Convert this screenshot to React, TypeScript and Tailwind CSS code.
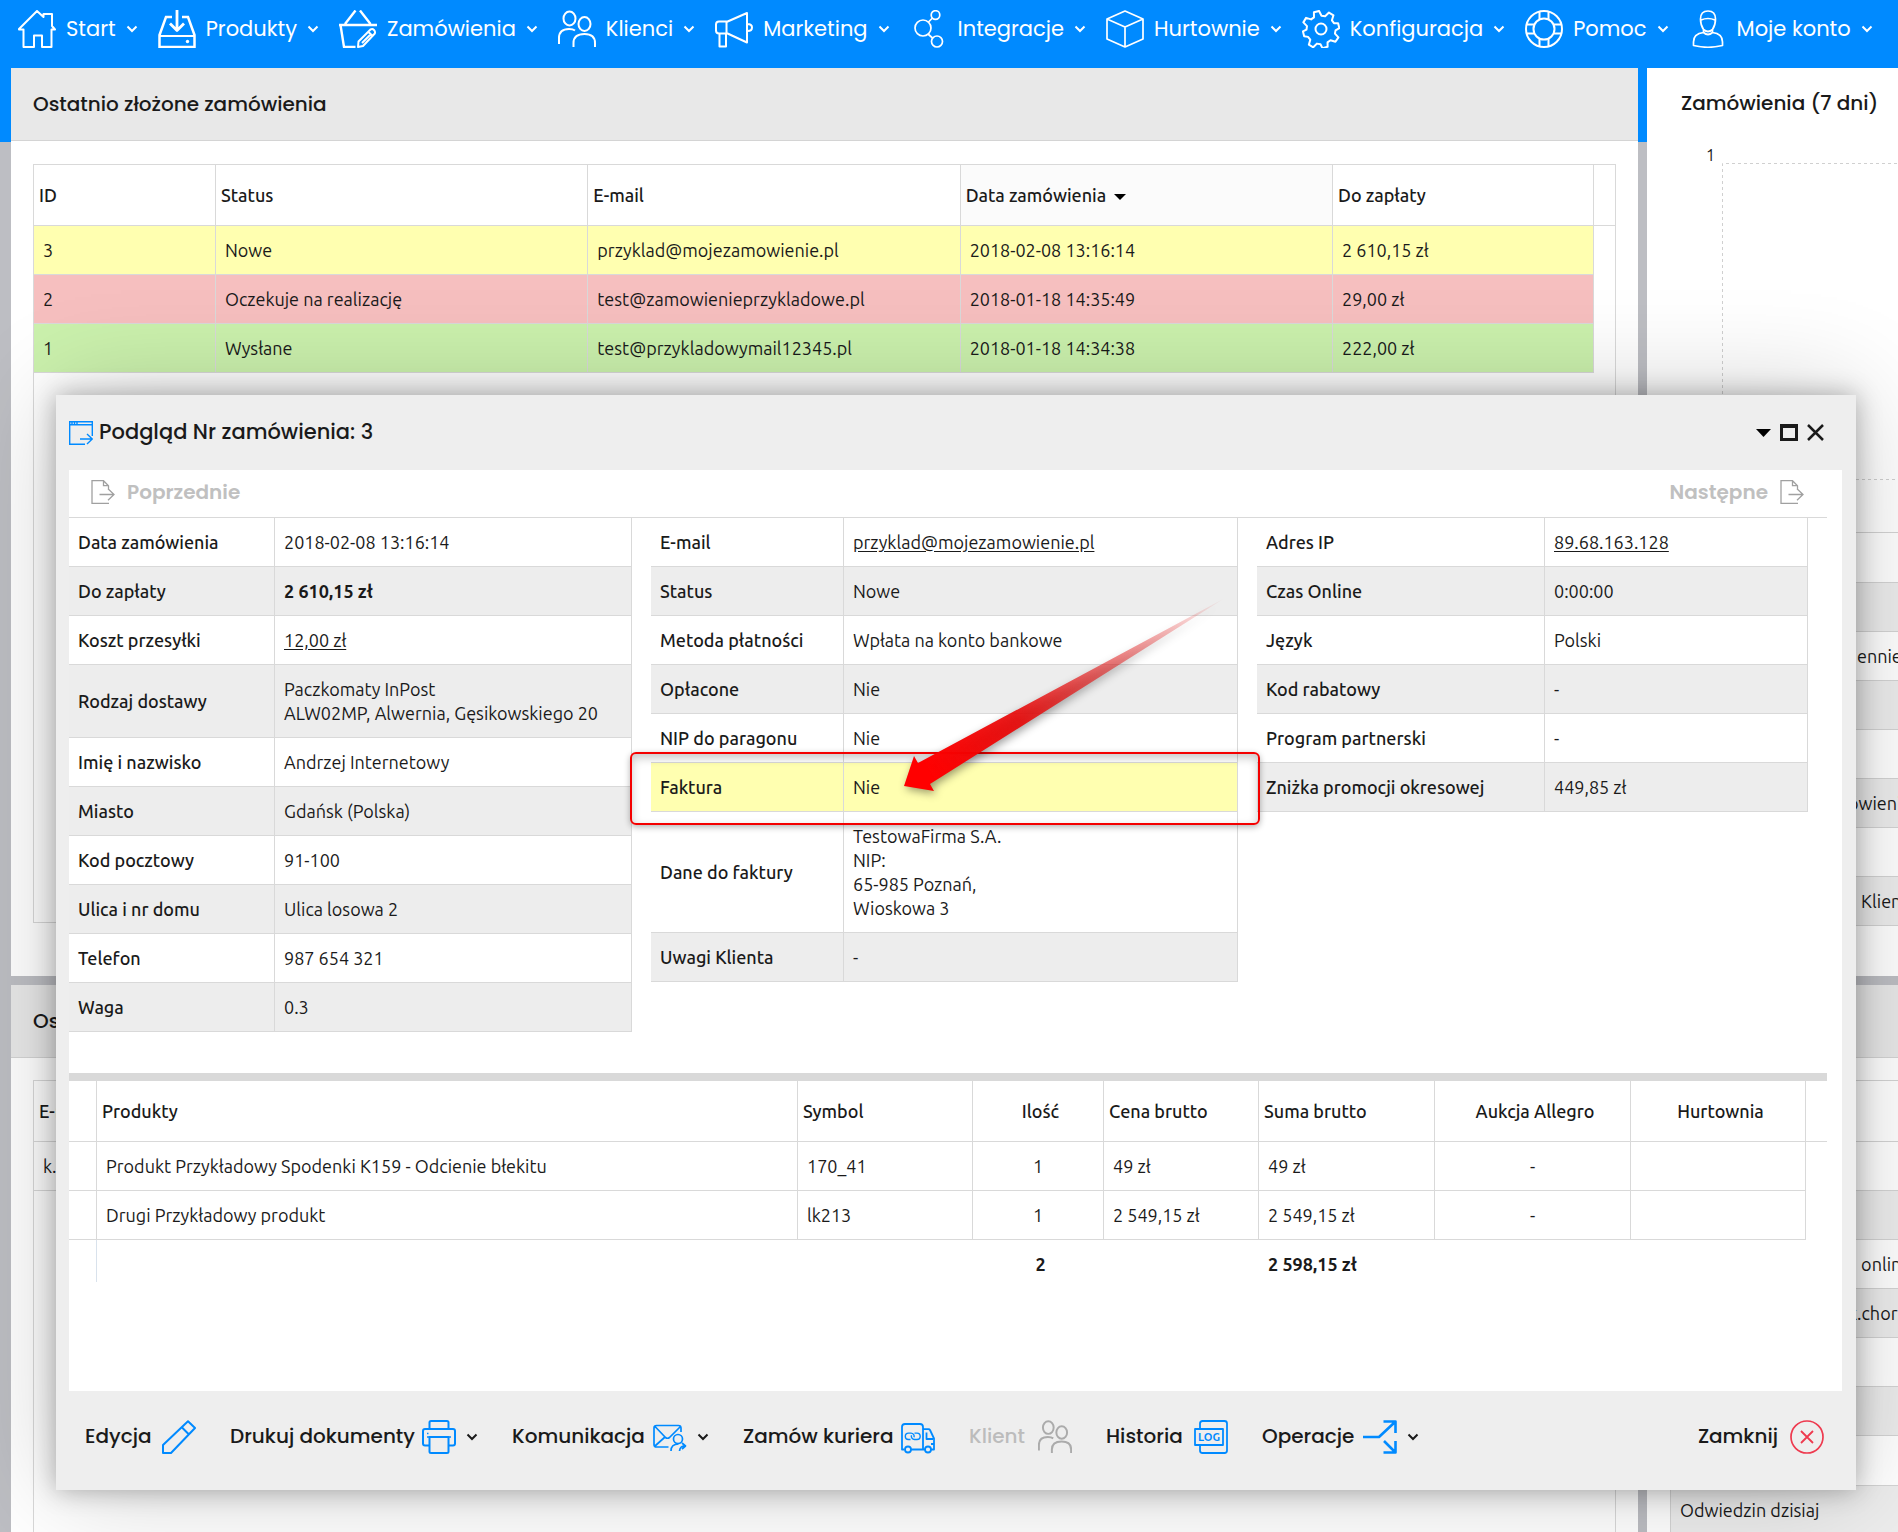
import type { ReactNode } from "react";
import clsx from "clsx";

const HEADING = "font-['Poppins','Inter',sans-serif]";
const BODY = "font-['Ubuntu','Noto_Sans',sans-serif]";

/* ---------- icons ---------- */

const NavIcon = ({ children }: { children: ReactNode }) => (
  <svg
    viewBox="0 0 38 38"
    className="size-[38px] shrink-0"
    fill="none"
    stroke="currentColor"
    strokeWidth={2}
    strokeLinejoin="round"
    aria-hidden="true"
  >
    {children}
  </svg>
);

const ActionIcon = ({ children, className }: { children: ReactNode; className?: string }) => (
  <svg
    viewBox="0 0 34 34"
    className={clsx("size-[34px] shrink-0", className)}
    fill="none"
    stroke="currentColor"
    strokeWidth={2}
    strokeLinejoin="round"
    aria-hidden="true"
  >
    {children}
  </svg>
);

const Chevron = () => (
  <svg viewBox="0 0 12 8" className="h-2 w-3 shrink-0" fill="none" stroke="currentColor" strokeWidth={2} aria-hidden="true">
    <path d="M1.500 1.500 6 6l4.500-4.500" />
  </svg>
);

const DocArrow = () => (
  <svg viewBox="0 0 24 24" className="size-6 shrink-0" fill="none" stroke="currentColor" strokeWidth={1.300} aria-hidden="true">
    <path d="M18 23.300H1V.7h11.500l5 5v3M12.500.7v5h5M8.500 14.500h14M17 8.800l6 5.700-6 5.700" />
  </svg>
);

const homeIcon = (
  <NavIcon>
    <path d="M1 19 19 1l6.500 6V4H34v12l3 3.500h-3.500V37H24V25.500h-8V37H5.500V19.500H1z" />
  </NavIcon>
);

const productsIcon = (
  <NavIcon>
    <path d="M14 7H8L1.500 25v12h35V25L30 7h-6" strokeWidth={2.500} strokeLinejoin="miter" />
    <path d="M1.500 26h35" />
    <path d="M19 0v20M12 13.500l7 7 7-7" strokeWidth={2.800} />
    <circle cx="29.500" cy="31.500" r="1.700" fill="currentColor" stroke="none" />
  </NavIcon>
);

const ordersIcon = (
  <NavIcon>
    <path d="M16.500.5 6 14M21 .5l10.500 13.500M0 15h38M1.500 15 5 37h11.500" strokeWidth={2.400} />
    <path d="m19.500 31.500 12-12q2-1 3.500.5t.8 3.500L24 36l-5 1zM29.500 22l4 4M23 33l9-9" />
  </NavIcon>
);

const peoplePaths = (
  <>
    <ellipse cx="11.500" cy="8.500" rx="6" ry="7" />
    <ellipse cx="26.500" cy="14" rx="6" ry="7" />
    <path d="M1 34V28q0-9 10-9 4 0 6 1.500M15.500 37v-4q0-9 11-9 10.500 0 10.500 9v4" />
  </>
);

const marketingIcon = (
  <NavIcon>
    <path d="M11.500 12 32 3v29.500L11.500 23zM11.500 11.500H4q-3 0-3 3v6q0 3 3 3h7.500zM4.500 24v12.500H11V24M32.500 14q4.500 0 4.500 3.500T32.500 21" />
  </NavIcon>
);

const integrationsIcon = (
  <NavIcon>
    <circle cx="13" cy="18" r="8" strokeWidth={1.700} />
    <circle cx="25.500" cy="5" r="4.300" strokeWidth={1.700} />
    <circle cx="27" cy="31.500" r="5.500" strokeWidth={1.700} />
    <path d="m18.500 12 4-4M18 24l4.500 4" strokeWidth={1.700} />
  </NavIcon>
);

const wholesaleIcon = (
  <NavIcon>
    <path d="M19 1 37 9v20l-18 8L1 29V9zM1 9l18 8 18-8M19 17v20" strokeWidth={1.700} />
  </NavIcon>
);

const settingsIcon = (
  <NavIcon>
    <path
      d="M16.200 1h5.300l1.200 5.200 3.400 1.400L30.700 5l3.700 3.700-2.700 4.500 1.300 3.300 4 1v5l-4.200 1.300-1.400 3 2.500 4.500-4 3.600-4.400-2.700-3.400 1.400-1 4.300h-5.300l-1-4.300-3.300-1.400-4.500 2.700-3.600-3.600 2.600-4.500L4.500 23.500.9 22v-5l3.900-1 1.300-3.200-2.600-4.500L7.200 4.600l4.500 2.700 3.300-1.300z"
      transform="rotate(-14 19 19)"
    />
    <circle cx="19" cy="19" r="5.500" />
  </NavIcon>
);

const helpIcon = (
  <NavIcon>
    <circle cx="19" cy="19" r="18" />
    <circle cx="19" cy="19" r="10.500" />
    <path d="M14.500 2v7.500M23.500 2v7.500M14.500 28.500V36M23.500 28.500V36M2 14.500h7.500M2 23.500h7.500M28.500 14.500H36M28.500 23.500H36" />
  </NavIcon>
);

const accountIcon = (
  <NavIcon>
    <path
      d="M11.500 9q0-8 7.500-8t7.500 8q0 6-3 10.500-4.500 4-9 0-3-4.500-3-10.500zM12 10q7-3 14 0M14.500 20v2.500q-10 1-10 9.500v3.500Q19 39 33.500 35.500V32q0-8.500-10-9.500V20M14.500 22.500q4.500 4 9 0"
      strokeWidth={1.700}
    />
  </NavIcon>
);

const NAV: { label: string; icon: ReactNode }[] = [
  { label: "Start", icon: homeIcon },
  { label: "Produkty", icon: productsIcon },
  { label: "Zamówienia", icon: ordersIcon },
  { label: "Klienci", icon: <NavIcon>{peoplePaths}</NavIcon> },
  { label: "Marketing", icon: marketingIcon },
  { label: "Integracje", icon: integrationsIcon },
  { label: "Hurtownie", icon: wholesaleIcon },
  { label: "Konfiguracja", icon: settingsIcon },
  { label: "Pomoc", icon: helpIcon },
  { label: "Moje konto", icon: accountIcon },
];

/* ---------- top navigation ---------- */

const TopNav = () => (
  <nav
    className={clsx(
      HEADING,
      "grid h-[68px] shrink-0 grid-cols-[140fr_182fr_218fr_157fr_195fr_196fr_196fr_223fr_164fr_203fr] bg-[#008aff] pr-[6px] pl-[18px] pb-[10px] text-[21px] text-white",
    )}
  >
    {NAV.map(({ label, icon }) => (
      <button key={label} type="button" className="flex items-center gap-[10px] pr-5 whitespace-nowrap">
        {icon}
        <span className="flex-1 text-left">{label}</span>
        <Chevron />
      </button>
    ))}
  </nav>
);

/* ---------- dashboard behind the window ---------- */

const ORDERS = [
  { id: "3", status: "Nowe", email: "przyklad@mojezamowienie.pl", date: "2018-02-08 13:16:14", total: "2 610,15 zł", color: "bg-[#ffffb0]" },
  { id: "2", status: "Oczekuje na realizację", email: "test@zamowienieprzykladowe.pl", date: "2018-01-18 14:35:49", total: "29,00 zł", color: "bg-[#f6bfbf]" },
  { id: "1", status: "Wysłane", email: "test@przykladowymail12345.pl", date: "2018-01-18 14:34:38", total: "222,00 zł", color: "bg-[#cbf1ad]" },
];

const CELL = "border-r border-b border-[#d9d9d9]";

const PanelTitle = ({ children }: { children?: ReactNode }) => (
  <h2 className={clsx(HEADING, "h-[73px] shrink-0 border-b border-[#d4d4d4] bg-[#e8e8e8] px-[22px] text-[20px] leading-[72px] font-medium whitespace-nowrap")}>
    {children}
  </h2>
);

const OrdersPanel = () => (
  <section className="flex min-h-0 flex-col overflow-hidden bg-white">
    <PanelTitle>Ostatnio złożone zamówienia</PanelTitle>
    <div className="mx-[22px] mt-[23px] mb-[53px] flex-1 border border-[#d9d9d9]">
      <table className="w-full table-fixed border-separate border-spacing-0 text-left">
        <colgroup>
          <col className="w-[182px]" />
          <col />
          <col />
          <col />
          <col className="w-[261px]" />
          <col className="w-[21px]" />
        </colgroup>
        <thead>
          <tr className="h-[61px]">
            <th className={clsx(CELL, "pl-[5px] font-medium")}>ID</th>
            <th className={clsx(CELL, "pl-[5px] font-medium")}>Status</th>
            <th className={clsx(CELL, "pl-[5px] font-medium")}>E-mail</th>
            <th className={clsx(CELL, "bg-[#fbfbfb] pl-[5px] font-medium")}>
              Data zamówienia
              <svg viewBox="0 0 12 6" className="ml-2 inline h-[6px] w-3" aria-hidden="true">
                <path d="M0 0h12L6 6z" />
              </svg>
            </th>
            <th className={clsx(CELL, "pl-[5px] font-medium")}>Do zapłaty</th>
            <td className="border-b border-[#d9d9d9]" />
          </tr>
        </thead>
        <tbody>
          {ORDERS.map((o) => (
            <tr key={o.id} className="h-[49px]">
              {[o.id, o.status, o.email, o.date, o.total].map((v) => (
                <td key={v} className={clsx(CELL, o.color, "pl-[9px]")}>{v}</td>
              ))}
              <td />
            </tr>
          ))}
        </tbody>
      </table>
    </div>
  </section>
);

const CustomersPanel = () => (
  <section className="flex min-h-0 flex-col overflow-hidden bg-white">
    <PanelTitle>Ostatnio zalogowani</PanelTitle>
    <div className="mx-[22px] mt-[22px] flex-1 border border-b-0 border-[#d9d9d9]">
      <div className="flex h-[61px] items-center border-b border-[#d9d9d9] pl-[5px] font-medium">E-mail</div>
      <div className="flex h-[49px] items-center border-b border-[#d9d9d9] pl-[9px]">k.</div>
    </div>
  </section>
);

type Stat = { label?: string; value?: string; gray?: boolean; tall?: boolean; early?: boolean };

// label column / value column, the value is what peeks out beside the window
const StatRow = ({ label, value, gray, tall, early }: Stat) => (
  <div
    className={clsx(
      "grid shrink-0 items-center overflow-hidden border-b border-[#d4d4d4] pl-[9px] whitespace-nowrap",
      early ? "grid-cols-[168px_1fr]" : "grid-cols-[177px_1fr]",
      tall ? "h-[50px]" : "h-[49px]",
      gray ? "bg-[#ededed]" : "bg-white",
    )}
  >
    <span>{label}</span>
    <span>{value}</span>
  </div>
);

const ChartPanel = () => (
  <section className="flex min-h-0 flex-col overflow-hidden bg-white">
    <h2 className={clsx(HEADING, "h-[73px] shrink-0 pl-[34px] text-[20px] leading-[70px] font-medium whitespace-nowrap")}>
      Zamówienia (7 dni)
    </h2>
    <div className="flex h-[391px] shrink-0 pl-[59px]">
      <span className="w-4 pt-[2px] text-base">1</span>
      <svg className="mt-[22px] h-[318px] flex-1 overflow-visible" aria-hidden="true">
        <path d="M260 .5H7.500v316H260" fill="none" stroke="#d0d0d0" strokeDasharray="3 3" />
      </svg>
    </div>
    <div className="ml-[23px] border-t border-l border-[#d4d4d4]">
      <StatRow tall />
      <StatRow gray />
      <StatRow value="ennie" />
      <StatRow gray />
      <StatRow />
      <StatRow gray value="ówienia" early />
      <StatRow />
      <StatRow gray value={"\u00a0Klient"} />
    </div>
  </section>
);

const VisitsPanel = () => (
  <section className="flex min-h-0 flex-col overflow-hidden bg-white">
    <PanelTitle />
    <div className="mt-[22px] ml-[23px] border-t border-l border-[#d4d4d4]">
      <div className="h-[61px] border-b border-[#d4d4d4]" />
      <StatRow />
      <StatRow gray />
      <StatRow value={"\u00a0online"} />
      <StatRow gray value="k.chor" early />
      <StatRow />
      <StatRow gray />
      <StatRow tall />
      <StatRow gray label="Odwiedzin dzisiaj" />
    </div>
  </section>
);

/* ---------- order window ---------- */

type Detail = { label: string; value: ReactNode; tone?: "gray" | "yellow" };

const link = (text: string, href: string) => (
  <a href={href} className="underline underline-offset-2">
    {text}
  </a>
);

const SHIPPING: Detail[] = [
  { label: "Data zamówienia", value: "2018-02-08 13:16:14" },
  { label: "Do zapłaty", value: <b>2 610,15 zł</b>, tone: "gray" },
  { label: "Koszt przesyłki", value: link("12,00 zł", "#koszt") },
  { label: "Rodzaj dostawy", value: <>Paczkomaty InPost<br />ALW02MP, Alwernia, Gęsikowskiego 20</>, tone: "gray" },
  { label: "Imię i nazwisko", value: "Andrzej Internetowy" },
  { label: "Miasto", value: "Gdańsk (Polska)", tone: "gray" },
  { label: "Kod pocztowy", value: "91-100" },
  { label: "Ulica i nr domu", value: "Ulica losowa 2", tone: "gray" },
  { label: "Telefon", value: "987 654 321" },
  { label: "Waga", value: "0.3", tone: "gray" },
];

const PAYMENT: Detail[] = [
  { label: "E-mail", value: link("przyklad@mojezamowienie.pl", "mailto:przyklad@mojezamowienie.pl") },
  { label: "Status", value: "Nowe", tone: "gray" },
  { label: "Metoda płatności", value: "Wpłata na konto bankowe" },
  { label: "Opłacone", value: "Nie", tone: "gray" },
  { label: "NIP do paragonu", value: "Nie" },
  { label: "Faktura", value: "Nie", tone: "yellow" },
  { label: "Dane do faktury", value: <>TestowaFirma S.A.<br />NIP:<br />65-985 Poznań,<br />Wioskowa 3</> },
  { label: "Uwagi Klienta", value: "-", tone: "gray" },
];

const SESSION: Detail[] = [
  { label: "Adres IP", value: link("89.68.163.128", "#ip") },
  { label: "Czas Online", value: "0:00:00", tone: "gray" },
  { label: "Język", value: "Polski" },
  { label: "Kod rabatowy", value: "-", tone: "gray" },
  { label: "Program partnerski", value: "-" },
  { label: "Zniżka promocji okresowej", value: "449,85 zł", tone: "gray" },
];

const DetailTable = ({ rows, labelWidth }: { rows: Detail[]; labelWidth: string }) => (
  <table className="w-full border-separate border-spacing-0 text-left">
    <tbody>
      {rows.map((row) => (
        <tr key={row.label} className={clsx(row.tone === "gray" && "bg-[#ededed]", row.tone === "yellow" && "bg-[#ffffb0]")}>
          <th className={clsx(CELL, labelWidth, "py-3 pl-[9px] leading-6 font-medium whitespace-nowrap")}>{row.label}</th>
          <td className={clsx(CELL, "py-3 pl-[9px] leading-6 whitespace-nowrap")}>{row.value}</td>
        </tr>
      ))}
    </tbody>
  </table>
);

const Annotation = () => (
  <>
    <div className="pointer-events-none absolute top-[234px] right-[-22px] left-[-21px] h-[73px] rounded-md border-2 border-[#f40000] shadow-[0_2px_6px_rgba(0,0,0,0.3),inset_0_4px_10px_rgba(0,0,0,0.22)]" />
    <svg
      viewBox="0 0 330 200"
      className="pointer-events-none absolute top-[78px] left-[250px] h-[200px] w-[330px] drop-shadow-[2px_3px_4px_rgba(0,0,0,0.4)]"
      aria-hidden="true"
    >
      <defs>
        <linearGradient id="arrow" gradientUnits="userSpaceOnUse" x1="326" y1="0" x2="30" y2="180">
          <stop offset="0" stopColor="#e00000" stopOpacity="0" />
          <stop offset="0.350" stopColor="#e41414" stopOpacity="0.500" />
          <stop offset="0.700" stopColor="#e80505" stopOpacity="0.900" />
          <stop offset="1" stopColor="#ff0000" />
        </linearGradient>
      </defs>
      <path d="M3 190 13 160l4 7L324 2 29 188l4 7z" fill="url(#arrow)" />
    </svg>
  </>
);

const PRODUCTS = [
  { name: "Produkt Przykładowy Spodenki K159 - Odcienie błekitu", symbol: "170_41", qty: "1", price: "49 zł", sum: "49 zł" },
  { name: "Drugi Przykładowy produkt", symbol: "lk213", qty: "1", price: "2 549,15 zł", sum: "2 549,15 zł" },
];

const ProductsTable = () => (
  <table className="w-full table-fixed border-separate border-spacing-0 text-left">
    <colgroup>
      <col className="w-[28px]" />
      <col />
      <col className="w-[175px]" />
      <col className="w-[131px]" />
      <col className="w-[155px]" />
      <col className="w-[176px]" />
      <col className="w-[196px]" />
      <col className="w-[175px]" />
      <col className="w-[21px]" />
    </colgroup>
    <thead>
      <tr className="h-[61px]">
        <td className={CELL} />
        <th className={clsx(CELL, "pl-[5px] font-medium")}>Produkty</th>
        <th className={clsx(CELL, "pl-[5px] font-medium")}>Symbol</th>
        <th className={clsx(CELL, "pl-[5px] text-center font-medium")}>Ilość</th>
        <th className={clsx(CELL, "pl-[5px] font-medium")}>Cena brutto</th>
        <th className={clsx(CELL, "pl-[5px] font-medium")}>Suma brutto</th>
        <th className={clsx(CELL, "pl-[5px] text-center font-medium")}>Aukcja Allegro</th>
        <th className={clsx(CELL, "pl-[5px] text-center font-medium")}>Hurtownia</th>
        <td className="border-b border-[#d9d9d9]" />
      </tr>
    </thead>
    <tbody>
      {PRODUCTS.map((p) => (
        <tr key={p.name} className="h-[49px]">
          <td className={CELL} />
          <td className={clsx(CELL, "pl-[9px]")}>{p.name}</td>
          <td className={clsx(CELL, "pl-[9px]")}>{p.symbol}</td>
          <td className={clsx(CELL, "text-center")}>{p.qty}</td>
          <td className={clsx(CELL, "pl-[9px]")}>{p.price}</td>
          <td className={clsx(CELL, "pl-[9px]")}>{p.sum}</td>
          <td className={clsx(CELL, "text-center")}>-</td>
          <td className={CELL} />
          <td />
        </tr>
      ))}
    </tbody>
    <tfoot>
      <tr className="font-bold">
        <td className="border-r border-[#d9e2ec]" />
        <td />
        <td />
        <td className="pt-3 pb-[6px] pl-1 text-center leading-6">2</td>
        <td />
        <td className="pt-3 pb-[6px] pl-[9px] leading-6">2 598,15 zł</td>
        <td />
        <td />
        <td />
      </tr>
    </tfoot>
  </table>
);

const editIcon = (
  <ActionIcon className="text-[#008aff]">
    <path d="M1 33v-8L26 1.200 33 8 9 33zM20 7.500l6.500 6.500" />
  </ActionIcon>
);

const printIcon = (
  <ActionIcon className="text-[#008aff]">
    <path d="M7.500 8.500V2.500Q7.500 1 9 1h16q1.500 0 1.500 1.500v6M7.500 25.500H3q-2 0-2-2V11q0-2 2-2h28q2 0 2 2v12.500q0 2-2 2h-4.500M7.500 17h19v14.500q0 1.500-1.500 1.500H9q-1.500 0-1.500-1.500z" />
    <path d="M5 17h24M5 13.500h1.500" strokeWidth={1.500} />
  </ActionIcon>
);

const mailIcon = (
  <ActionIcon className="text-[#008aff]">
    <path d="M15.500 27H3.500q-2.500 0-2.500-2.500V8q0-2.500 2.500-2.500h22Q28 5.500 28 8v4M2 6.500l10.500 11q2 1.500 4 0L27.500 6.500M2 26l10-9" strokeWidth={1.700} />
    <circle cx="25" cy="19" r="4.500" strokeWidth={1.700} />
    <path d="M18 31q0-7 7.500-7M26.500 31q.5-5 5-5M29 23l3.500 3-3.500 3" strokeWidth={1.700} />
  </ActionIcon>
);

const truckIcon = (
  <ActionIcon className="text-[#008aff]">
    <path d="M3.500 29.500H1V7q0-3 3-3h15q3 0 3 3v22.500M10 29.500h14M30 29.500h3V18.500L29 10q-.5-.8-1.500-.8H22M25.500 12.500v6.500H32M33 24h-3" strokeWidth={1.800} />
    <circle cx="7" cy="29.500" r="3" strokeWidth={1.800} />
    <circle cx="27" cy="29.500" r="3" strokeWidth={1.800} />
    <path d="M9.500 19.500H7.500a3.200 3.200 0 0 1 0-6.400h2.500a3.200 3.200 0 0 1 3 4.200M13.500 13.100h2.500a3.200 3.200 0 0 1 0 6.400h-2.500a3.200 3.200 0 0 1-3-4.200" strokeWidth={1.400} />
  </ActionIcon>
);

const clientIcon = (
  <ActionIcon className="text-[#ababab]">
    <g transform="scale(0.895)" strokeWidth={2.200}>{peoplePaths}</g>
  </ActionIcon>
);

const logIcon = (
  <ActionIcon className="text-[#008aff]">
    <path d="M6 9V3.500Q6 1 8.500 1h22Q33 1 33 3.500v27q0 2.500-2.500 2.500h-22Q6 33 6 30.500V25M1 9h28v16H1z" strokeWidth={1.800} />
    <text x="15" y="21" textAnchor="middle" fontSize="11" fontWeight="700" fill="currentColor" stroke="none" fontFamily="Ubuntu, sans-serif">
      LOG
    </text>
  </ActionIcon>
);

const operationsIcon = (
  <ActionIcon className="text-[#008aff]">
    <path d="M0 17h16L32 2M20.500 1.500h12V13M21 21l11 11M20.500 32.500h12V21" strokeWidth={2.600} />
  </ActionIcon>
);

const closeIcon = (
  <ActionIcon className="text-[#ee3a4f]">
    <circle cx="17" cy="17" r="16" strokeWidth={1.700} />
    <path d="m11 11 12 12M23 11 11 23" strokeWidth={1.800} />
  </ActionIcon>
);

const ACTIONS: { label: string; icon: ReactNode; menu?: boolean; disabled?: boolean; width: string }[] = [
  { label: "Edycja", icon: editIcon, width: "w-[111px]" },
  { label: "Drukuj dokumenty", icon: printIcon, menu: true, width: "w-[248px]" },
  { label: "Komunikacja", icon: mailIcon, menu: true, width: "w-[197px]" },
  { label: "Zamów kuriera", icon: truckIcon, width: "w-[192px]" },
  { label: "Klient", icon: clientIcon, disabled: true, width: "w-[103px]" },
  { label: "Historia", icon: logIcon, width: "w-[122px]" },
  { label: "Operacje", icon: operationsIcon, menu: true, width: "w-[157px]" },
];

const OrderWindow = () => (
  <section
    role="dialog"
    aria-labelledby="order-title"
    className="absolute top-[395px] right-[42px] left-[56px] flex h-[1095px] flex-col bg-[#eeeeee] pr-[14px] pl-[13px] shadow-[0_0_100px_rgba(0,0,0,0.2),0_0_24px_rgba(0,0,0,0.3)]"
  >
    <header className="flex h-[75px] shrink-0 items-center pr-[18px]">
      <svg viewBox="0 0 24 24" className="size-6 text-[#008aff]" fill="none" stroke="currentColor" strokeWidth={1.400} aria-hidden="true">
        <path d="M23.300 15V.7H.7v22.600H16M.7 3.700h22.600M3 .7v3M5.500.7v3M8 .7v3M11 18h12M18 13l5.300 5-5.300 5" />
      </svg>
      <h1 id="order-title" className={clsx(HEADING, "ml-[6px] flex-1 text-[21px] font-medium")}>
        Podgląd Nr zamówienia: 3
      </h1>
      <div className="flex items-center gap-[9px]">
        <button type="button" aria-label="Minimalizuj">
          <svg viewBox="0 0 15 8" className="h-2 w-[15px]"><path d="M0 0h15L7.500 8z" /></svg>
        </button>
        <button type="button" aria-label="Maksymalizuj" className="h-[17px] w-[18px] border-[3px] border-t-4 border-[#1a1a1a]" />
        <button type="button" aria-label="Zamknij okno">
          <svg viewBox="0 0 17 17" className="size-[17px]" stroke="currentColor" strokeWidth={2.500}>
            <path d="m1 1 15 15M16 1 1 16" />
          </svg>
        </button>
      </div>
    </header>

    <div className="flex min-h-0 flex-1 flex-col overflow-hidden bg-white pr-[15px]">
      <div className={clsx(HEADING, "flex h-[48px] shrink-0 items-center justify-between border-b border-[#d9d9d9] pr-[23px] pb-[2px] pl-[22px] text-[20px] font-semibold text-[#c0c0c0]")}>
        <button type="button" disabled className="flex items-center gap-3">
          <span className="text-[#a0a0a0]"><DocArrow /></span>
          Poprzednie
        </button>
        <button type="button" disabled className="flex items-center gap-3">
          Następne
          <span className="text-[#a0a0a0]"><DocArrow /></span>
        </button>
      </div>
      <div className="grid h-[555px] shrink-0 grid-cols-[563fr_587fr_551fr] items-start gap-[19px] pr-[19px]">
        <DetailTable rows={SHIPPING} labelWidth="w-[206px]" />
        <div className="relative">
          <DetailTable rows={PAYMENT} labelWidth="w-[193px]" />
          <Annotation />
        </div>
        <DetailTable rows={SESSION} labelWidth="w-[288px]" />
      </div>
      <div className="h-2 shrink-0 bg-[#d9d9d9]" />
      <ProductsTable />
    </div>

    <footer className={clsx(HEADING, "flex h-[99px] shrink-0 items-center pr-[18px] pb-2 pl-4 text-[20px] font-medium whitespace-nowrap")}>
      <div className="flex flex-1 gap-[34px]">
        {ACTIONS.map((a) => (
          <button
            key={a.label}
            type="button"
            disabled={a.disabled}
            className={clsx("flex items-center", a.width, a.disabled && "text-[#bcbcbc]")}
          >
            <span className="flex-1 text-left">{a.label}</span>
            {a.icon}
            {a.menu && <span className="ml-[10px]"><Chevron /></span>}
          </button>
        ))}
      </div>
      <button type="button" className="flex items-center gap-3">
        Zamknij
        {closeIcon}
      </button>
    </footer>
  </section>
);

export default function App() {
  return (
    <div className={clsx(BODY, "relative flex h-screen flex-col overflow-hidden bg-[#bdbec3] text-lg text-[#1a1a1a]")}>
      <TopNav />
      <main className="grid min-h-0 flex-1 grid-cols-[1fr_251px] grid-rows-[908fr_547fr] gap-[9px] bg-[linear-gradient(#008aff_74px,#bdbec3_74px)] pl-[11px]">
        <OrdersPanel />
        <ChartPanel />
        <CustomersPanel />
        <VisitsPanel />
      </main>
      <OrderWindow />
    </div>
  );
}
